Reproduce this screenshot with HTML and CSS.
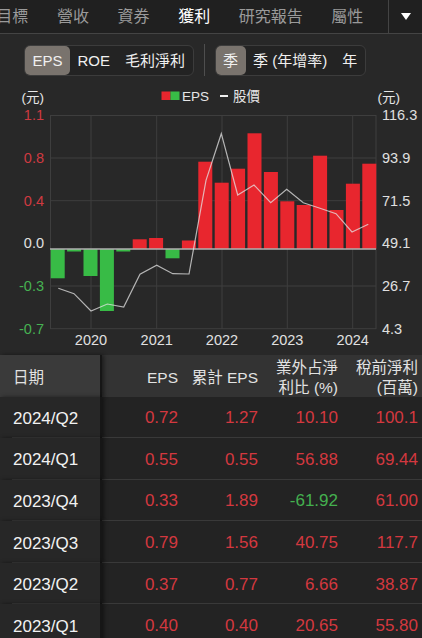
FILE: index.html
```html
<!DOCTYPE html>
<html lang="zh-Hant">
<head>
    <meta charset="UTF-8">
    <meta name="viewport" content="width=device-width, initial-scale=1.0">
    <title>獲利 - EPS</title>
    <link rel="stylesheet" href="styles.css">
</head>
<body>
    <div class="tabbar">
        <div class="tabs">
            <span class="tab">目標</span>
            <span class="tab">營收</span>
            <span class="tab">資券</span>
            <span class="tab active">獲利</span>
            <span class="tab">研究報告</span>
            <span class="tab">屬性</span>
        </div>
        <div class="tab-more">
            <svg width="10" height="7" viewBox="0 0 10 7"><polygon points="0,0 10,0 5,7" class="caret"/></svg>
        </div>
    </div>

    <div class="switches">
        <div class="segment">
            <span class="seg-item selected">EPS</span>
            <span class="seg-item">ROE</span>
            <span class="seg-item">毛利淨利</span>
        </div>
        <div class="switch-divider"></div>
        <div class="segment">
            <span class="seg-item selected">季</span>
            <span class="seg-item">季 (年增率)</span>
            <span class="seg-item">年</span>
        </div>
    </div>

    <div class="chart">
        <svg width="422" height="269" viewBox="0 85 422 269">
            <!-- legend -->
            <text class="legend" x="44" y="96" text-anchor="end">(元)</text>
            <rect class="bar-up" x="161.5" y="90.5" width="9" height="8.5"/>
            <rect class="bar-down" x="170.5" y="90.5" width="9" height="8.5"/>
            <text class="legend" x="182" y="95">EPS</text>
            <line class="legend-line" x1="220" y1="95" x2="228" y2="95"/>
            <text class="legend" x="233" y="95">股價</text>
            <text class="legend" x="377.5" y="96">(元)</text>

            <!-- grid -->
            <g class="grid">
                <line x1="50" y1="114.5" x2="376" y2="114.5"/>
                <line x1="50" y1="157" x2="376" y2="157"/>
                <line x1="50" y1="199.7" x2="376" y2="199.7"/>
                <line x1="50" y1="285" x2="376" y2="285"/>
                <line x1="50" y1="327.7" x2="376" y2="327.7"/>
                <line x1="50.5" y1="114" x2="50.5" y2="328"/>
                <line x1="91" y1="114" x2="91" y2="328"/>
                <line x1="156.7" y1="114" x2="156.7" y2="328"/>
                <line x1="222" y1="114" x2="222" y2="328"/>
                <line x1="287.3" y1="114" x2="287.3" y2="328"/>
                <line x1="352.7" y1="114" x2="352.7" y2="328"/>
                <line x1="376" y1="114" x2="376" y2="328"/>
            </g>

            <!-- eps bars, 2019Q3 .. 2024Q2 -->
            <g>
                <rect class="bar-down" x="50.7" y="248" width="14" height="29.3"/>
                <rect class="bar-down" x="67.1" y="248" width="14" height="2.5"/>
                <rect class="bar-down" x="83.5" y="248" width="14" height="27"/>
                <rect class="bar-down" x="99.9" y="248" width="14" height="62"/>
                <rect class="bar-down" x="116.3" y="248" width="14" height="2.5"/>
                <rect class="bar-up" x="132.7" y="238.3" width="14" height="9.7"/>
                <rect class="bar-up" x="149.1" y="237" width="14" height="11"/>
                <rect class="bar-down" x="165.5" y="248" width="14" height="9.3"/>
                <rect class="bar-up" x="181.9" y="239.5" width="14" height="8.5"/>
                <rect class="bar-up" x="198.3" y="160.7" width="14" height="87.3"/>
                <rect class="bar-up" x="214.7" y="181.7" width="14" height="66.3"/>
                <rect class="bar-up" x="231.1" y="167.7" width="14" height="80.3"/>
                <rect class="bar-up" x="247.5" y="132.3" width="14" height="115.7"/>
                <rect class="bar-up" x="263.9" y="171" width="14" height="77"/>
                <rect class="bar-up" x="280.3" y="200.3" width="14" height="47.7"/>
                <rect class="bar-up" x="296.7" y="204" width="14" height="44"/>
                <rect class="bar-up" x="313.1" y="154.7" width="14" height="93.3"/>
                <rect class="bar-up" x="329.5" y="209" width="14" height="39"/>
                <rect class="bar-up" x="345.9" y="182.7" width="14" height="65.3"/>
                <rect class="bar-up" x="362.3" y="162.7" width="14" height="85.3"/>
            </g>

            <line class="zero" x1="50" y1="248" x2="376" y2="248"/>

            <polyline class="price" points="58.3,287.3 74,292.7 91,310 107.3,303 123.7,306 140,273.3 156.7,264.3 172.7,272.7 189,273 206,179.3 221.3,132.7 237.7,194 254,184 270.7,201.7 286.7,188.3 303.3,201.7 320,207.3 336,212.7 352,231 368.3,223.3"/>

            <!-- left axis -->
            <g class="axis" text-anchor="end">
                <text class="lbl-up" x="44" y="114.3">1.1</text>
                <text class="lbl-up" x="44" y="157">0.8</text>
                <text class="lbl-up" x="44" y="199.7">0.4</text>
                <text class="lbl-zero" x="44" y="242">0.0</text>
                <text class="lbl-down" x="44" y="285">-0.3</text>
                <text class="lbl-down" x="44" y="327.7">-0.7</text>
            </g>

            <!-- right axis -->
            <g class="axis">
                <text x="382" y="114.3">116.3</text>
                <text x="382" y="157">93.9</text>
                <text x="382" y="199.7">71.5</text>
                <text x="382" y="242">49.1</text>
                <text x="382" y="285">26.7</text>
                <text x="382" y="327.7">4.3</text>
            </g>

            <!-- years -->
            <g class="axis" text-anchor="middle">
                <text x="91" y="339">2020</text>
                <text x="156.7" y="339">2021</text>
                <text x="222" y="339">2022</text>
                <text x="287.3" y="339">2023</text>
                <text x="352.7" y="339">2024</text>
            </g>
        </svg>
    </div>

    <div class="table">
        <div class="row head">
            <div class="cell date">日期</div>
            <div class="cell num">EPS</div>
            <div class="cell num">累計 EPS</div>
            <div class="cell num">業外占淨<br>利比 (%)</div>
            <div class="cell num">稅前淨利<br>(百萬)</div>
        </div>
        <div class="row">
            <div class="cell date">2024/Q2</div>
            <div class="cell num up">0.72</div>
            <div class="cell num up">1.27</div>
            <div class="cell num up">10.10</div>
            <div class="cell num up">100.1</div>
        </div>
        <div class="row">
            <div class="cell date">2024/Q1</div>
            <div class="cell num up">0.55</div>
            <div class="cell num up">0.55</div>
            <div class="cell num up">56.88</div>
            <div class="cell num up">69.44</div>
        </div>
        <div class="row">
            <div class="cell date">2023/Q4</div>
            <div class="cell num up">0.33</div>
            <div class="cell num up">1.89</div>
            <div class="cell num down">-61.92</div>
            <div class="cell num up">61.00</div>
        </div>
        <div class="row">
            <div class="cell date">2023/Q3</div>
            <div class="cell num up">0.79</div>
            <div class="cell num up">1.56</div>
            <div class="cell num up">40.75</div>
            <div class="cell num up">117.7</div>
        </div>
        <div class="row">
            <div class="cell date">2023/Q2</div>
            <div class="cell num up">0.37</div>
            <div class="cell num up">0.77</div>
            <div class="cell num up">6.66</div>
            <div class="cell num up">38.87</div>
        </div>
        <div class="row">
            <div class="cell date">2023/Q1</div>
            <div class="cell num up">0.40</div>
            <div class="cell num up">0.40</div>
            <div class="cell num up">20.65</div>
            <div class="cell num up">55.80</div>
        </div>
    </div>
</body>
</html>
```

FILE: styles.css
```css
body {
    margin: 0;
    height: 638px;
    overflow: hidden;
    background-color: #282828;
    font-family: "Liberation Sans", "Noto Sans CJK TC", sans-serif;
    color: #eee;
}

/* top tabs */
.tabbar {
    display: flex;
    height: 33px;
    background-color: #202020;
    border-bottom: 1px solid #444;
    overflow: hidden;
}

.tabs {
    flex: 1;
    display: flex;
    margin-left: -18px;
    overflow: hidden;
    white-space: nowrap;
}

.tab {
    padding: 0 14.3px;
    line-height: 33px;
    font-size: 16px;
    color: #9a9a9a;
}

.tab.active {
    color: #fff;
}

.tab-more {
    width: 33px;
    border-left: 1px solid #444;
    display: flex;
    align-items: center;
    justify-content: center;
}

.caret {
    fill: #fff;
}

/* switches */
.switches {
    display: flex;
    align-items: center;
    gap: 10px;
    padding: 10px 24px;
    background-color: #282828;
}

.segment {
    display: flex;
    height: 31px;
    box-sizing: border-box;
    border: 1px solid #3c3c3c;
    border-radius: 6px;
    background-color: #232323;
}

.seg-item {
    padding: 0 7.5px;
    line-height: 29px;
    font-size: 15px;
    color: #f0f0f0;
    white-space: nowrap;
}

.seg-item.selected {
    background-color: #79736d;
    border-radius: 5px;
}

.switch-divider {
    width: 1px;
    height: 32px;
    background-color: #4e4e4e;
}

/* chart */
.chart {
    background-color: #282828;
}

.chart svg {
    display: block;
}

.legend {
    font-size: 13.5px;
    fill: #e6e6e6;
    dominant-baseline: central;
}

.legend-line {
    stroke: #eee;
    stroke-width: 2;
}

.grid line {
    stroke: #3e3e3e;
    stroke-width: 1;
}

.bar-up {
    fill: #e8262e;
}

.bar-down {
    fill: #38bb46;
}

.zero {
    stroke: #b0b0b0;
    stroke-width: 1.5;
}

.price {
    fill: none;
    stroke: rgba(228, 228, 228, 0.75);
    stroke-width: 1.2;
}

.axis text {
    font-size: 14.5px;
    fill: #e0e0e0;
    dominant-baseline: central;
}

.axis .lbl-up {
    fill: #cf3a41;
}

.axis .lbl-down {
    fill: #46b152;
}

/* table */
.table {
    background-color: #232323;
}

.row {
    display: flex;
    height: 41.6px;
}

.cell {
    box-sizing: border-box;
    display: flex;
    align-items: center;
    padding-top: 3px;
    font-size: 17px;
}

.date {
    width: 102px;
    flex: none;
    padding-left: 13px;
    color: #f2f2f2;
    border-right: 2px solid #161616;
    box-shadow: 2px 0 4px rgba(0, 0, 0, 0.45);
    position: relative;
    z-index: 1;
    background: linear-gradient(#393939, #393939) 12px 100% / calc(100% - 12px) 1px no-repeat, #272727;
}

.num {
    flex: 1;
    justify-content: flex-end;
    text-align: right;
    padding-right: 4px;
    border-bottom: 1px solid #393939;
}

.num.up {
    color: #d3383f;
}

.num.down {
    color: #44b04f;
}

.head {
    height: 41.5px;
    background-color: #333;
}

.head .cell {
    font-size: 15.5px;
    line-height: 19.6px;
    color: #e2e2e2;
    padding-top: 4px;
}

.head .date {
    background: #3a3a3a;
}

.head .num {
    border-bottom: none;
}
```
